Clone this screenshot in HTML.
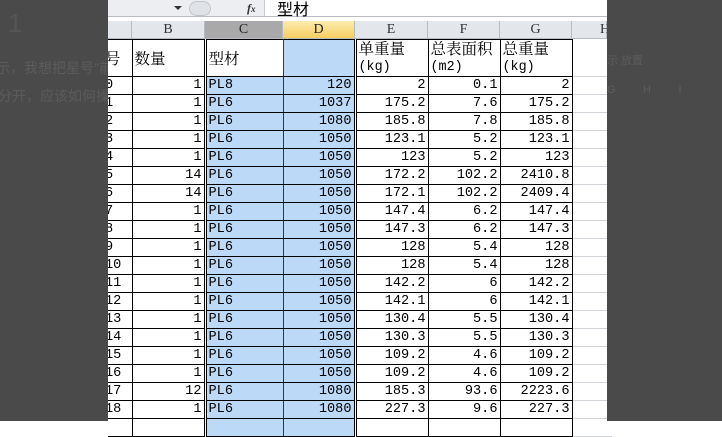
<!DOCTYPE html>
<html><head><meta charset="utf-8"><style>
*{margin:0;padding:0;box-sizing:border-box}
body{width:722px;height:421px;overflow:hidden;background:#fff;position:relative;font-family:"Liberation Mono","Noto Serif CJK SC",monospace;}
.ov{position:absolute;top:0;height:421px;background:#4a4a4a;overflow:hidden}
.ov span{position:absolute;color:#5c5c5c;font:14px "Liberation Sans","Noto Sans CJK SC",sans-serif;white-space:nowrap}
#fb{position:absolute;left:108px;top:0;width:499px;height:17px;background:#eceef1;border-bottom:1px solid #b9bdc3}
#fbw{position:absolute;left:264px;top:0;width:343px;height:17px;background:#fff;border-bottom:1px solid #b9bdc3;border-left:1px solid #c8ccd0;font:16px "Noto Sans CJK SC",sans-serif;line-height:17px;padding-left:12px;color:#000}
#gap{position:absolute;left:108px;top:18px;width:499px;height:3px;background:#fff}
.h{position:absolute;top:21px;height:18px;background:#e3e6ea;border-right:1px solid #b8bcc2;border-bottom:1px solid #b8bcc2;text-align:center;font:14px "Liberation Serif",serif;line-height:18px;color:#333}
table{position:absolute;left:108px;top:39px;border-collapse:collapse;table-layout:fixed}
td{height:18px;border:1px solid #000;font-size:13.6px;line-height:16px;padding:0 2px;white-space:nowrap;overflow:hidden;text-align:right;color:#000}
td.a{text-align:left;padding:0;border-left:none;text-indent:-3px}
td.c{text-align:left;background:#bcd9f7;border-left:3px double #000;border-right:1px solid #1e3a6a}
td.d{background:#bcd9f7;border-right:3px double #000}
td.hh{border-right:none;border-top:none;border-bottom:1px solid #d0d4d8;border-left:1px solid #000}
tr.t td{height:30px;text-align:left;vertical-align:top;line-height:16px;padding-top:0;padding-bottom:0}
tr.t td.c{vertical-align:middle}
.cj{font-family:"Noto Serif CJK SC","Noto Sans CJK SC",serif;font-size:15.5px}
</style></head><body>
<div id="fb"><span style="position:absolute;left:66px;top:6px;width:0;height:0;border-left:4px solid transparent;border-right:4px solid transparent;border-top:4px solid #333"></span>
<span style="position:absolute;left:81px;top:1px;width:22px;height:15px;border-radius:8px;background:#dfe2e6;border:1px solid #c2c6cb"></span>
<span style="position:absolute;left:139px;top:0;font:italic bold 12px 'Liberation Serif',serif;line-height:16px;color:#333">f<span style="font-size:9px">x</span></span></div>
<div id="fbw">型材</div>
<div id="gap"></div>
<div class="h" style="left:108px;width:24px"></div>
<div class="h" style="left:132px;width:73px">B</div>
<div class="h" style="left:205px;width:78px;background:#a9a9a9;color:#222">C</div>
<div class="h" style="left:283px;width:72px;background:linear-gradient(#fcebb0,#f6cf60);color:#222">D</div>
<div class="h" style="left:355px;width:73px">E</div>
<div class="h" style="left:428px;width:72px">F</div>
<div class="h" style="left:500px;width:72px">G</div>
<div class="h" style="left:572px;width:35px;text-align:left;padding-left:28px">H</div>
<table>
<colgroup><col style="width:24px"><col style="width:73px"><col style="width:78px"><col style="width:72px"><col style="width:73px"><col style="width:72px"><col style="width:72px"><col style="width:40px"></colgroup>
<tr class="t"><td class="a cj" style="vertical-align:middle">号</td><td class="cj" style="vertical-align:middle">数量</td><td class="c cj" style="background:#fff">型材</td><td class="d"></td><td class="cj">单重量<br><span style="font-family:'Liberation Mono';font-size:13.4px">(kg)</span></td><td class="cj">总表面积<br><span style="font-family:'Liberation Mono';font-size:13.4px">(m2)</span></td><td class="cj">总重量<br><span style="font-family:'Liberation Mono';font-size:13.4px">(kg)</span></td><td class="hh"></td></tr>
<tr><td class="a">0</td><td>1</td><td class="c">PL8</td><td class="d">120</td><td>2</td><td>0.1</td><td>2</td><td class="hh"></td></tr>
<tr><td class="a">1</td><td>1</td><td class="c">PL6</td><td class="d">1037</td><td>175.2</td><td>7.6</td><td>175.2</td><td class="hh"></td></tr>
<tr><td class="a">2</td><td>1</td><td class="c">PL6</td><td class="d">1080</td><td>185.8</td><td>7.8</td><td>185.8</td><td class="hh"></td></tr>
<tr><td class="a">3</td><td>1</td><td class="c">PL6</td><td class="d">1050</td><td>123.1</td><td>5.2</td><td>123.1</td><td class="hh"></td></tr>
<tr><td class="a">4</td><td>1</td><td class="c">PL6</td><td class="d">1050</td><td>123</td><td>5.2</td><td>123</td><td class="hh"></td></tr>
<tr><td class="a">5</td><td>14</td><td class="c">PL6</td><td class="d">1050</td><td>172.2</td><td>102.2</td><td>2410.8</td><td class="hh"></td></tr>
<tr><td class="a">6</td><td>14</td><td class="c">PL6</td><td class="d">1050</td><td>172.1</td><td>102.2</td><td>2409.4</td><td class="hh"></td></tr>
<tr><td class="a">7</td><td>1</td><td class="c">PL6</td><td class="d">1050</td><td>147.4</td><td>6.2</td><td>147.4</td><td class="hh"></td></tr>
<tr><td class="a">8</td><td>1</td><td class="c">PL6</td><td class="d">1050</td><td>147.3</td><td>6.2</td><td>147.3</td><td class="hh"></td></tr>
<tr><td class="a">9</td><td>1</td><td class="c">PL6</td><td class="d">1050</td><td>128</td><td>5.4</td><td>128</td><td class="hh"></td></tr>
<tr><td class="a">10</td><td>1</td><td class="c">PL6</td><td class="d">1050</td><td>128</td><td>5.4</td><td>128</td><td class="hh"></td></tr>
<tr><td class="a">11</td><td>1</td><td class="c">PL6</td><td class="d">1050</td><td>142.2</td><td>6</td><td>142.2</td><td class="hh"></td></tr>
<tr><td class="a">12</td><td>1</td><td class="c">PL6</td><td class="d">1050</td><td>142.1</td><td>6</td><td>142.1</td><td class="hh"></td></tr>
<tr><td class="a">13</td><td>1</td><td class="c">PL6</td><td class="d">1050</td><td>130.4</td><td>5.5</td><td>130.4</td><td class="hh"></td></tr>
<tr><td class="a">14</td><td>1</td><td class="c">PL6</td><td class="d">1050</td><td>130.3</td><td>5.5</td><td>130.3</td><td class="hh"></td></tr>
<tr><td class="a">15</td><td>1</td><td class="c">PL6</td><td class="d">1050</td><td>109.2</td><td>4.6</td><td>109.2</td><td class="hh"></td></tr>
<tr><td class="a">16</td><td>1</td><td class="c">PL6</td><td class="d">1050</td><td>109.2</td><td>4.6</td><td>109.2</td><td class="hh"></td></tr>
<tr><td class="a">17</td><td>12</td><td class="c">PL6</td><td class="d">1080</td><td>185.3</td><td>93.6</td><td>2223.6</td><td class="hh"></td></tr>
<tr><td class="a">18</td><td>1</td><td class="c">PL6</td><td class="d">1080</td><td>227.3</td><td>9.6</td><td>227.3</td><td class="hh"></td></tr>
<tr><td class="a"></td><td></td><td class="c"></td><td class="d"></td><td></td><td></td><td></td><td class="hh"></td></tr>
</table>
<div class="ov" style="left:0;width:108px">
<span style="left:8px;top:8px;font-size:26px;color:#555">1</span>
<span style="left:-4px;top:58px">示，我想把星号"前</span>
<span style="left:-2px;top:86px">分开，应该如何操</span>
</div>
<div class="ov" style="left:607px;width:115px">
<span style="left:0;top:52px;font-size:11px">示 放置</span>
<span style="left:0;top:84px;font-size:11px">G &nbsp; &nbsp; &nbsp; &nbsp; H &nbsp; &nbsp; &nbsp; &nbsp; I</span>
</div>
</body></html>
